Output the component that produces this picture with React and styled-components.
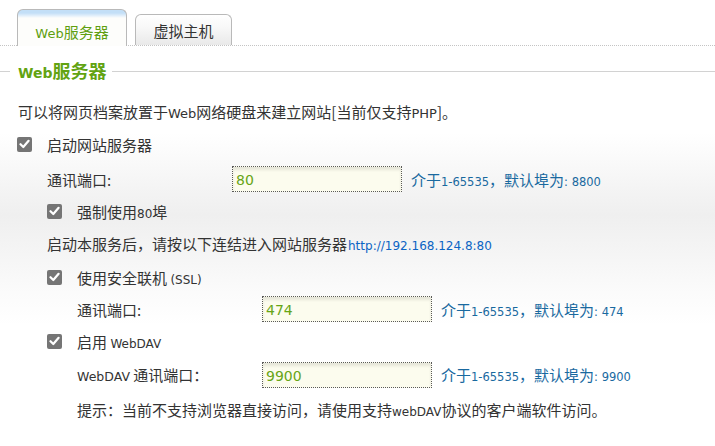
import React from "react";
import styled, { createGlobalStyle } from "styled-components";

const Global = createGlobalStyle`
  html, body { margin: 0; padding: 0; background: #fff; }
  body {
    font-family: "Noto Sans CJK SC", "DejaVu Sans", sans-serif;
    font-size: 15px;
    color: #333;
  }
`;

const Page = styled.div`
  width: 715px;
  height: 446px;
  overflow: hidden;
  background: #fff;
`;

const TabBar = styled.div`
  display: flex;
  align-items: flex-end;
  gap: 8px;
  height: 46px;
  padding-left: 17px;
  border-bottom: 1px dotted #c4c4c4;
  box-sizing: border-box;
`;

const Tab = styled.div`
  box-sizing: border-box;
  display: flex;
  align-items: center;
  justify-content: center;
  width: ${(p) => (p.$active ? "110px" : "97px")};
  height: ${(p) => (p.$active ? "37px" : "31px")};
  border: 1px solid #b9b9b9;
  border-bottom: none;
  border-radius: 6px 6px 0 0;
  color: ${(p) => (p.$active ? "#5f9f10" : "#333")};
  font-size: 15px;
  padding-top: ${(p) => (p.$active ? "6px" : "0")};
  background: ${(p) =>
    p.$active
      ? "linear-gradient(to bottom, #c3dff7 0, #c3dff7 3px, #e6f1fb 6px, #fdfdfb 8px, #fdfdfb 100%)"
      : "linear-gradient(to bottom, #ffffff 0%, #f7f7f7 45%, #e9e9e9 100%)"};
  margin-bottom: ${(p) => (p.$active ? "-1px" : "0")};
`;

const Text = styled.span`
  white-space: pre;
`;

const Lat = styled.span`
  font-family: "DejaVu Sans", Verdana, sans-serif;
  font-size: ${(p) => p.$size || 12}px;
`;

const HeadingRow = styled.div`
  display: flex;
  align-items: center;
  height: 44px;
  margin-top: 3px;
  &::before {
    content: "";
    width: 10px;
    height: 1px;
    background: #d2d2d2;
    margin-right: 8px;
  }
  &::after {
    content: "";
    flex: 1;
    height: 1px;
    background: #d2d2d2;
    margin-left: 6px;
  }
`;

const Heading = styled.h2`
  margin: 0;
  font-size: 18px;
  font-weight: 700;
  color: #62a312;
  line-height: 20px;
`;

const Body = styled.div`
  padding-top: 2px;
  background: linear-gradient(
    to bottom,
    #ffffff 0px,
    #ffffff 40px,
    #efefef 122px,
    #fbfbfb 200px,
    #ffffff 232px
  );
`;

const Row = styled.div`
  display: flex;
  align-items: center;
  height: ${(p) => p.$h}px;
  padding-left: ${(p) => p.$indent}px;
  white-space: nowrap;
`;

const Box = styled.span`
  box-sizing: border-box;
  width: 15px;
  height: 15px;
  border-radius: 2px;
  background: #757575;
  display: inline-flex;
  align-items: center;
  justify-content: center;
  margin-right: 15px;
  flex: none;
`;

const FieldLabel = styled.span`
  width: 185px;
  flex: none;
`;

const Input = styled.input`
  box-sizing: border-box;
  width: 170px;
  height: 26px;
  border: 1px dotted #5a5a5a;
  background: #fcfcee;
  box-shadow: inset 0 3px 3px rgba(0, 0, 0, 0.09);
  color: #67a516;
  font-family: "DejaVu Sans", Verdana, sans-serif;
  font-size: 14px;
  padding: 2px 3px 0;
  outline: none;
`;

const Hint = styled.span`
  color: #19699f;
  margin-left: 9px;
  font-size: 15px;
`;

const Link = styled.a`
  color: #0b64c4;
  text-decoration: none;
  font-family: "DejaVu Sans", Verdana, sans-serif;
  font-size: 12px;
  margin-left: 1px;
`;

const Check = () => (
  <Box>
    <svg width="11" height="10" viewBox="0 0 11 10">
      <path d="M1.5 5.2 L4.3 8 L9.6 1.8" fill="none" stroke="#fff" strokeWidth="2.2" strokeLinecap="round" strokeLinejoin="round" />
    </svg>
  </Box>
);

const PortField = ({ indent, h, label, value, def }) => (
  <Row $indent={indent} $h={h}>
    <FieldLabel>{label}</FieldLabel>
    <Input defaultValue={value} />
    <Hint>
      介于<Lat $size={11.5}>1-65535</Lat>，默认埠为<Lat $size={11.5}>: {def}</Lat>
    </Hint>
  </Row>
);

export default function App() {
  return (
    <Page>
      <Global />
      <TabBar>
        <Tab $active>
          <Text>
            <Lat $size={13}>Web</Lat>服务器
          </Text>
        </Tab>
        <Tab>虚拟主机</Tab>
      </TabBar>
      <HeadingRow>
        <Heading>
          <Lat $size={14}>Web</Lat>服务器
        </Heading>
      </HeadingRow>
      <Body>
        <Row $indent={18} $h={32}>
          <Text>
            可以将网页档案放置于<Lat $size={13}>Web</Lat>网络硬盘来建立网站[当前仅支持<Lat $size={13}>PHP</Lat>]。
          </Text>
        </Row>
        <Row $indent={17} $h={34}>
          <Check />
          <Text>启动网站服务器</Text>
        </Row>
        <PortField indent={47} h={36} label="通讯端口:" value="80" def="8800" />
        <Row $indent={47} $h={28}>
          <Check />
          <Text>
            强制使用<Lat>80</Lat>埠
          </Text>
        </Row>
        <Row $indent={47} $h={37}>
          <Text>
            启动本服务后，请按以下连结进入网站服务器
            <Link href="#">http://192.168.124.8:80</Link>
          </Text>
        </Row>
        <Row $indent={47} $h={30}>
          <Check />
          <Text>
            使用安全联机 <Lat $size={12}>(SSL)</Lat>
          </Text>
        </Row>
        <PortField indent={77} h={34} label="通讯端口:" value="474" def="474" />
        <Row $indent={47} $h={30}>
          <Check />
          <Text>
            启用 <Lat>WebDAV</Lat>
          </Text>
        </Row>
        <PortField
          indent={77}
          h={37}
          label={
            <Text>
              <Lat $size={12.5}>WebDAV</Lat> 通讯端口：
            </Text>
          }
          value="9900"
          def="9900"
        />
        <Row $indent={77} $h={32}>
          <Text>
            提示：当前不支持浏览器直接访问，请使用支持<Lat>webDAV</Lat>协议的客户端软件访问。
          </Text>
        </Row>
      </Body>
    </Page>
  );
}
